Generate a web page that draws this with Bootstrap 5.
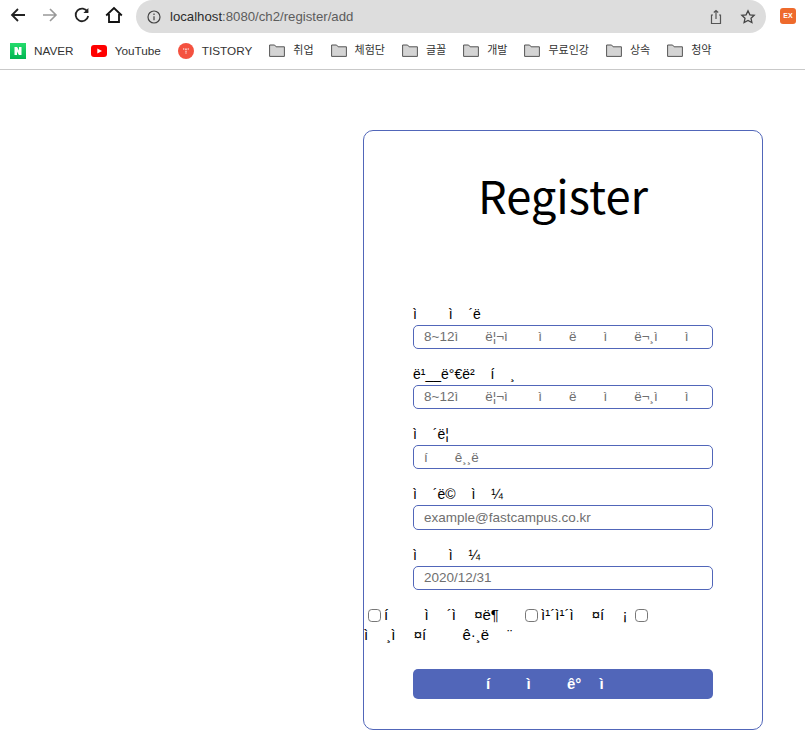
<!DOCTYPE html>
<html lang="ko">
<head>
    <meta charset="UTF-8">
    <meta name="viewport" content="width=device-width, initial-scale=1.0">
    <title>Register</title>
    <link href="https://cdn.jsdelivr.net/npm/bootstrap@5.3.0/dist/css/bootstrap.min.css" rel="stylesheet">
    <style>
        body { font-family: "Liberation Sans", "Noto Sans CJK KR", sans-serif; background: #fff; color: #000; }
        .top-bar { height: 36px; padding: 3px 0 0 9px; gap: 14px; align-items: flex-start; }
        .tool-btn { width: 18px; height: 18px; display: block; margin-top: 3px; }
        .addr-bar { width: 630px; height: 33px; margin: -3px 0 0 -1px; background: #dddddd; border-radius: 17px; padding: 0 10px 0 11px; color: #5c5c5c; font-size: 13.2px; }
        .addr-bar b { font-weight: 400; color: #2b2b2b; }
        .addr-text { margin-left: 9px; }
        .ext-icon { width: 16px; height: 16px; margin-top: 5px; border-radius: 3px; background: #ee6a2c; color: #fff; font-size: 7px; font-weight: 700; line-height: 16px; text-align: center; }
        .mark-bar { height: 34px; border-bottom: 1px solid #c9c9c9; padding: 0 0 4px 10px; font-size: 11.75px; color: #333; gap: 17px; }
        .mark-item { gap: 8px; }
        .kr-text { font-size: 11px; }
        .page-main { padding: 60px 42px 0 0; }
        .reg-box { width: 400px; height: 600px; border: 1px solid #5166b9; border-radius: 10px; }
        .reg-title { font-family: "Noto Sans CJK KR", "Noto Sans", sans-serif; font-size: 45.3px; line-height: 60px; font-weight: 400; margin: 33px 0 78.6px; }
        .field-wrap { width: 300px; margin-left: 49px; height: 60.25px; }
        .field-label { font-size: 14px; line-height: 20px; word-spacing: 12px; padding-top: 1px; margin: 0 0 1px; display: block; white-space: pre; }
        .field-input { height: 24.25px; border: 1px solid #5166b9; border-radius: 5px; padding: 0 10px; font-size: 13.5px; line-height: 22px; }
        .field-input::placeholder { color: #6f6f6f; opacity: 1; }
        .sns-row { font-size: 15px; line-height: 20px; word-spacing: 14px; margin-top: 1.15px; }
        .sns-row input { width: 13px; height: 13px; margin: 0 3px 0 8px; border-color: #777; border-radius: 3px; vertical-align: -2px; float: none; }
        .sns-row input:first-child { margin-left: 4px; }
        .join-btn { width: 300px; height: 30px; margin: 24px 0 0 49px; padding: 0; background: #5166b9; color: #fff; border: 0; border-radius: 5px; font-size: 15px; font-weight: 700; word-spacing: 14px; white-space: pre; }
    </style>
</head>
<body>
    <div class="d-flex top-bar">
        <svg class="tool-btn" viewBox="0 0 18 18" fill="none" stroke="#222" stroke-width="1.8"><path d="M16 9H3M9 3L3 9l6 6"/></svg>
        <svg class="tool-btn" viewBox="0 0 18 18" fill="none" stroke="#999" stroke-width="1.6"><path d="M2 9h13M9 3l6 6-6 6"/></svg>
        <svg class="tool-btn" viewBox="0 0 18 18" fill="none" stroke="#222" stroke-width="1.8"><path d="M14.6 6A6.3 6.3 0 1 0 15.2 10"/><path d="M15.4 2v5h-5" fill="#222" stroke="none"/></svg>
        <svg class="tool-btn" viewBox="0 0 18 18" fill="none" stroke="#111" stroke-width="1.8"><path d="M1.2 9.500L9 2l7.800 7.500M4 8v8h10V8"/></svg>
        <div class="addr-bar d-flex align-items-center">
            <svg width="14" height="14" viewBox="0 0 14 14" fill="none" stroke="#444" stroke-width="1.2"><circle cx="7" cy="7" r="6"/><path d="M7 6.200v4M7 3.600v1.300"/></svg>
            <span class="addr-text flex-grow-1"><b>localhost</b>:8080/ch2/register/add</span>
            <svg width="16" height="16" viewBox="0 0 16 16" fill="none" stroke="#555" stroke-width="1.200"><path d="M5 6H3.500v8.500h9V6H11M8 10V1.500M5.800 3.500L8 1.500l2.200 2"/></svg>
            <svg class="ms-3" width="16" height="16" viewBox="0 0 16 16" fill="none" stroke="#444" stroke-width="1.300"><path d="M8 1.800l1.900 4 4.300.5-3.200 3 .9 4.300L8 11.500l-3.900 2.100.9-4.300-3.200-3 4.300-.5z"/></svg>
        </div>
        <div class="ext-icon">EX</div>
    </div>

    <div class="d-flex align-items-center mark-bar">
        <div class="d-flex align-items-center mark-item">
            <svg width="16" height="16" viewBox="0 0 16 16"><defs><linearGradient id="naverFill" x1="0" y1="0" x2="0" y2="1"><stop offset="0" stop-color="#25dc6c"/><stop offset="1" stop-color="#00b552"/></linearGradient></defs><rect width="16" height="16" fill="url(#naverFill)"/><path d="M4.500 4h2.600l1.900 3.500V4h2.500v8H8.900L7 8.500V12H4.500z" fill="#fff"/></svg>
            <span>NAVER</span>
        </div>
        <div class="d-flex align-items-center mark-item">
            <svg width="16" height="12" viewBox="0 0 16 12"><rect width="16" height="12" rx="3" fill="#f00"/><path d="M6.300 3.500L11 6l-4.700 2.500z" fill="#fff"/></svg>
            <span>YouTube</span>
        </div>
        <div class="d-flex align-items-center mark-item">
            <svg width="16" height="16" viewBox="0 0 16 16"><circle cx="8" cy="8" r="8" fill="#f4513f"/><path d="M5 6h6M8 6v5" stroke="#fff" stroke-width="1.200" stroke-dasharray="1.300 1"/></svg>
            <span>TISTORY</span>
        </div>
        <div class="d-flex align-items-center mark-item"><svg width="16" height="13" viewBox="0 0 16 13"><path d="M.6 12.400V1h5l1.500 1.800h8.300v9.600z" fill="#d4d4d4" stroke="#555"/></svg><span class="kr-text">취업</span></div>
        <div class="d-flex align-items-center mark-item"><svg width="16" height="13" viewBox="0 0 16 13"><path d="M.6 12.400V1h5l1.500 1.800h8.300v9.600z" fill="#d4d4d4" stroke="#555"/></svg><span class="kr-text">체험단</span></div>
        <div class="d-flex align-items-center mark-item"><svg width="16" height="13" viewBox="0 0 16 13"><path d="M.6 12.400V1h5l1.500 1.800h8.300v9.600z" fill="#d4d4d4" stroke="#555"/></svg><span class="kr-text">글꼴</span></div>
        <div class="d-flex align-items-center mark-item"><svg width="16" height="13" viewBox="0 0 16 13"><path d="M.6 12.400V1h5l1.500 1.800h8.300v9.600z" fill="#d4d4d4" stroke="#555"/></svg><span class="kr-text">개발</span></div>
        <div class="d-flex align-items-center mark-item"><svg width="16" height="13" viewBox="0 0 16 13"><path d="M.6 12.400V1h5l1.500 1.800h8.300v9.600z" fill="#d4d4d4" stroke="#555"/></svg><span class="kr-text">무료인강</span></div>
        <div class="d-flex align-items-center mark-item"><svg width="16" height="13" viewBox="0 0 16 13"><path d="M.6 12.400V1h5l1.500 1.800h8.300v9.600z" fill="#d4d4d4" stroke="#555"/></svg><span class="kr-text">상속</span></div>
        <div class="d-flex align-items-center mark-item"><svg width="16" height="13" viewBox="0 0 16 13"><path d="M.6 12.400V1h5l1.500 1.800h8.300v9.600z" fill="#d4d4d4" stroke="#555"/></svg><span class="kr-text">청약</span></div>
    </div>

    <main class="d-flex justify-content-end page-main">
        <form class="reg-box">
            <h1 class="reg-title text-center">Register</h1>
            <div class="field-wrap">
                <label class="field-label">ì&nbsp;&nbsp;ì&nbsp;´ë</label>
                <input type="text" class="form-control field-input" placeholder="8~12ì&emsp;&emsp;ë¦¬ì&emsp;&emsp;&#8197;ì&emsp;&emsp;ë&emsp;&emsp;ì&emsp;&emsp;ë¬¸ì&emsp;&emsp;ì">
            </div>
            <div class="field-wrap">
                <label class="field-label">ë¹__ë°€ë²&nbsp;í&nbsp;¸</label>
                <input type="text" class="form-control field-input" placeholder="8~12ì&emsp;&emsp;ë¦¬ì&emsp;&emsp;&#8197;ì&emsp;&emsp;ë&emsp;&emsp;ì&emsp;&emsp;ë¬¸ì&emsp;&emsp;ì">
            </div>
            <div class="field-wrap">
                <label class="field-label">ì&nbsp;´ë¦</label>
                <input type="text" class="form-control field-input" placeholder="í&emsp;&emsp;ê¸¸ë">
            </div>
            <div class="field-wrap">
                <label class="field-label">ì&nbsp;´ë©&nbsp;ì&nbsp;¼</label>
                <input type="text" class="form-control field-input" placeholder="example@fastcampus.co.kr">
            </div>
            <div class="field-wrap">
                <label class="field-label">ì&nbsp;&nbsp;ì&nbsp;¼</label>
                <input type="text" class="form-control field-input" placeholder="2020/12/31">
            </div>
            <div class="sns-row"><input type="checkbox" class="form-check-input">í&nbsp;&nbsp;ì&nbsp;´ì&nbsp;¤ë¶&nbsp;<input type="checkbox" class="form-check-input">ì¹´ì¹´ì&nbsp;¤í&nbsp;¡<input type="checkbox" class="form-check-input"><br>ì&nbsp;¸ì&nbsp;¤í&nbsp;&nbsp;ê·¸ë&nbsp;¨</div>
            <button type="button" class="btn join-btn">í&nbsp;&nbsp;ì&nbsp;&nbsp;ê°&nbsp;ì&nbsp;&nbsp;</button>
        </form>
    </main>

    <script src="https://cdn.jsdelivr.net/npm/bootstrap@5.3.0/dist/js/bootstrap.bundle.min.js"></script>
</body>
</html>
